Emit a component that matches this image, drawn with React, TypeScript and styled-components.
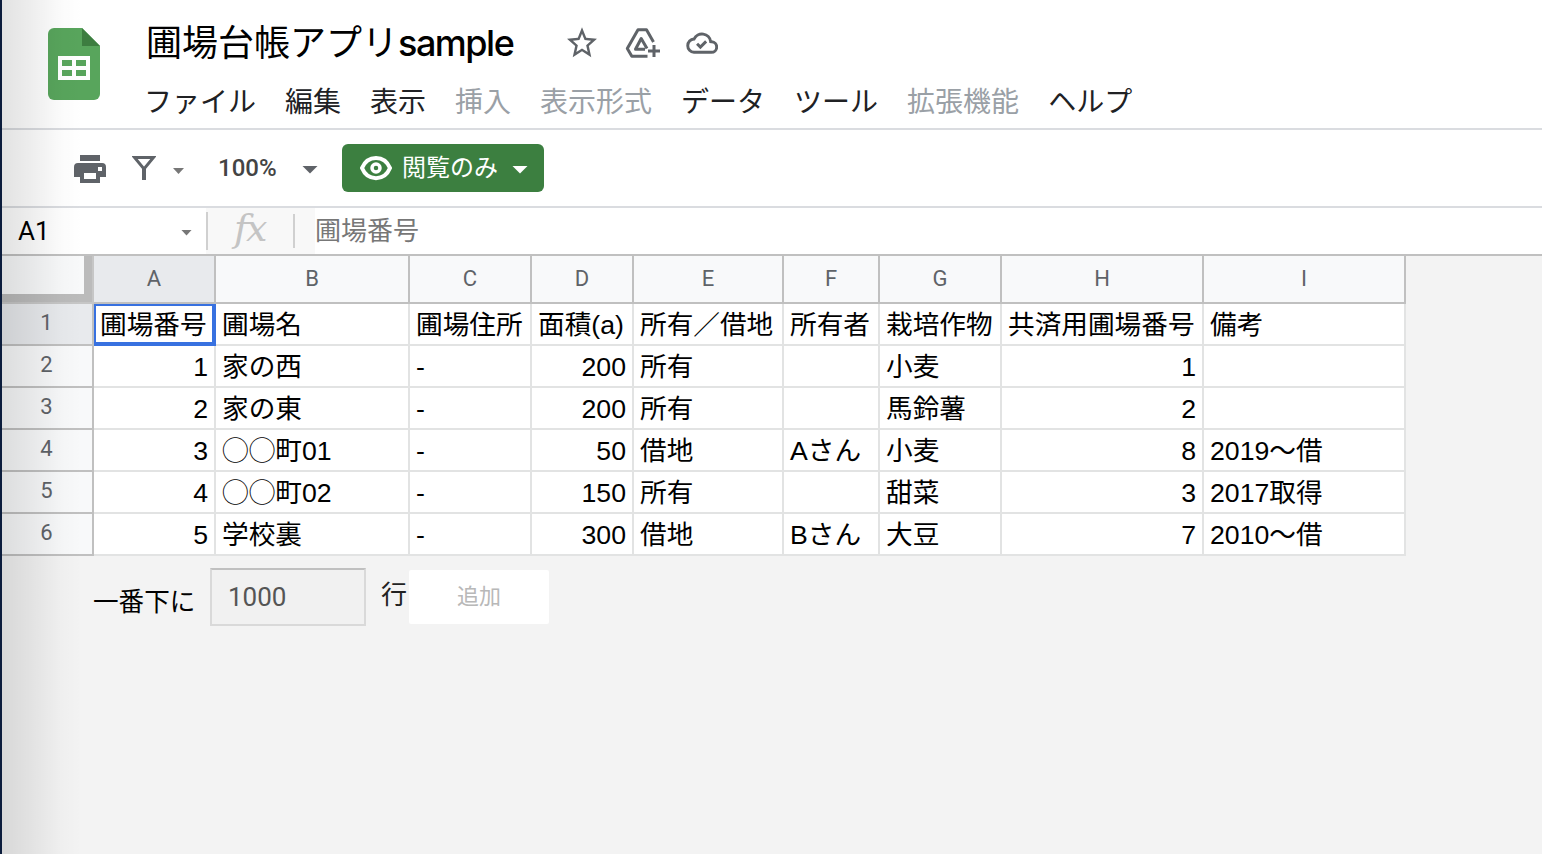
import React from "react";
import styled, { createGlobalStyle } from "styled-components";

const JP = '"Noto Sans CJK JP", sans-serif';

const GlobalStyle = createGlobalStyle`
  *, *::before, *::after { box-sizing: border-box; }
  body { margin: 0; background: #f3f3f3; overflow: hidden; font-family: "Liberation Sans", ${JP}; }
`;

const Page = styled.div`
  position: relative;
  height: 854px;
  border-left: 2px solid #0b1c3c;
  background: #f3f3f3;
  color: #000;
`;

const EdgeShadow = styled.div`
  position: absolute;
  inset: 0 auto 0 0;
  width: 80px;
  pointer-events: none;
  background: linear-gradient(to right, rgba(0, 0, 0, 0.115), rgba(0, 0, 0, 0.07) 35%, rgba(0, 0, 0, 0.015) 75%, transparent);
`;

const Header = styled.header`
  display: flex;
  height: 130px;
  padding-left: 46px;
  background: #fff;
  border-bottom: 2px solid #dadce0;
`;

const Logo = styled.svg`
  flex: none;
  width: 52px;
  height: 72px;
  margin-top: 28px;
`;

const HeaderMain = styled.div`
  display: flex;
  flex-direction: column;
  margin-left: 44px;
`;

const TitleRow = styled.div`
  display: flex;
  align-items: center;
  height: 83px;
  padding: 3px 0 0 2px;
`;

const Title = styled.h1`
  margin: 0;
  width: 418px;
  font: 400 36px/54px Inter, ${JP};
  white-space: nowrap;
`;

const Latin = styled.span`
  font-weight: 500;
  letter-spacing: -1.5px;
`;

const TitleIcon = styled.svg<{ $gap?: number; $solid?: boolean }>`
  flex: none;
  margin-left: ${(p) => p.$gap ?? 0}px;
  fill: ${(p) => (p.$solid ? "#5f6368" : "none")};
  stroke: ${(p) => (p.$solid ? "none" : "#5f6368")};
`;

const Menu = styled.nav`
  display: flex;
  gap: 29px;
  height: 45px;
  font: 400 28px/34px ${JP};
`;

const MenuItem = styled.span<{ $disabled?: boolean }>`
  color: ${(p) => (p.$disabled ? "#9aa0a6" : "#202124")};
  white-space: nowrap;
`;

const Toolbar = styled.div`
  display: flex;
  align-items: center;
  height: 78px;
  padding-left: 72px;
  background: #fff;
  border-bottom: 2px solid #dadce0;
`;

const ToolIcon = styled.svg<{ $gap?: number; $down?: number }>`
  flex: none;
  margin: ${(p) => p.$down ?? 0}px 0 0 ${(p) => p.$gap ?? 0}px;
`;

const Caret = styled.span<{ $w: number; $h: number; $gap: number; $color: string; $down?: number }>`
  flex: none;
  width: ${(p) => p.$w}px;
  height: ${(p) => p.$h}px;
  margin: ${(p) => p.$down ?? 3}px 0 0 ${(p) => p.$gap}px;
  background: ${(p) => p.$color};
  clip-path: polygon(0 0, 100% 0, 50% 100%);
`;

const Zoom = styled.span`
  width: 59px;
  margin-left: 34px;
  font: 500 24px/30px Roboto, sans-serif;
  color: #444;
  white-space: nowrap;
`;

const ViewOnly = styled.button`
  display: flex;
  align-items: center;
  width: 202px;
  height: 48px;
  margin-left: 24px;
  padding: 0 0 0 18px;
  border: 0;
  border-radius: 6px;
  background: #3c7f40;
  color: #fff;
  font: 400 24px/46px ${JP};
`;

const ViewLabel = styled.span`
  width: 99px;
  margin: -4px 0 0 10px;
  text-align: left;
  white-space: nowrap;
`;

const FormulaBar = styled.div`
  display: flex;
  height: 48px;
  background: #fff;
  border-bottom: 2px solid #c0c0c0;
`;

const NameBox = styled.div`
  display: flex;
  align-items: center;
  width: 204px;
  padding-left: 16px;
  font: 400 26px/46px Roboto, sans-serif;
`;

const NameText = styled.span`
  width: 163px;
`;

const FxArea = styled.div`
  display: flex;
  align-items: center;
  width: 109px;
  background: #f8f8f8;
`;

const Divider = styled.i<{ $h: number }>`
  width: 2px;
  height: ${(p) => p.$h}px;
  background: #d0d0d0;
`;

const Fx = styled.span`
  width: 85px;
  margin-top: -6px;
  padding-left: 26px;
  font: italic 400 38px/40px "DejaVu Serif", "Liberation Serif", serif;
  letter-spacing: -2px;
  color: #c4c4c4;
`;

const Formula = styled.span`
  font: 400 26px/42px ${JP};
  color: #777;
`;

const Grid = styled.div`
  display: grid;
  width: 1404px;
  grid-template-columns: 92px 122px 194px 122px 102px 150px 96px 122px 202px 202px;
  grid-template-rows: 48px repeat(6, 42px);
  background: #fff;
`;

const Corner = styled.div`
  border: solid #c6c6c6;
  border-width: 0 2px 2px 0;
  background: #f8f9fa;
  box-shadow: inset -8px -8px #bbb;
`;

const ColumnHead = styled.div<{ $active?: boolean }>`
  border: solid #c0c0c0;
  border-width: 0 2px 2px 0;
  background: ${(p) => (p.$active ? "#e8eaed" : "#f8f9fa")};
  color: #5f6368;
  font: 400 22px/46px Roboto, sans-serif;
  text-align: center;
`;

const RowHead = styled(ColumnHead)`
  line-height: 38px;
  padding-right: 1px;
`;

const Cell = styled.div<{ $right?: boolean; $selected?: boolean }>`
  padding: 0 6px;
  border: solid #e2e3e3;
  border-width: 0 2px 2px 0;
  font: 400 26.667px/42px "Liberation Sans", ${JP};
  text-align: ${(p) => (p.$right ? "right" : "left")};
  white-space: nowrap;
  ${(p) => p.$selected && "box-shadow: inset 2px 2px #3871e0, inset -2px -2px #3871e0; border-color: #3871e0;"}
`;

const AddRows = styled.div`
  display: flex;
  padding: 12px 0 0 91px;
  font: 400 26px/50px ${JP};
`;

const AddPrefix = styled.span`
  width: 117px;
  padding-top: 7px;
  font-size: 25.6px;
`;

const CountInput = styled.div`
  width: 156px;
  height: 58px;
  padding-left: 16px;
  border: 2px solid #d9d9d9;
  border-top-color: #c0c0c0;
  background: #f1f1f1;
  color: #555;
  font: 400 26px/54px Roboto, sans-serif;
`;

const Unit = styled.span`
  width: 28px;
  margin-left: 15px;
  color: #222;
`;

const AddButton = styled.button`
  width: 140px;
  height: 54px;
  margin-top: 2px;
  padding: 0 0 6px;
  border: 0;
  border-radius: 2px;
  background: #fff;
  color: #b8b8b8;
  font: 400 22px/48px ${JP};
`;

const menu: [string, boolean][] = [
  ["ファイル", false], ["編集", false], ["表示", false], ["挿入", true], ["表示形式", true],
  ["データ", false], ["ツール", false], ["拡張機能", true], ["ヘルプ", false],
];

const columns = "ABCDEFGHI".split("");
const numeric = [0, 3, 7];

const rows = [
  ["圃場番号", "圃場名", "圃場住所", "面積(a)", "所有／借地", "所有者", "栽培作物", "共済用圃場番号", "備考"],
  ["1", "家の西", "-", "200", "所有", "", "小麦", "1", ""],
  ["2", "家の東", "-", "200", "所有", "", "馬鈴薯", "2", ""],
  ["3", "◯◯町01", "-", "50", "借地", "Aさん", "小麦", "8", "2019〜借"],
  ["4", "◯◯町02", "-", "150", "所有", "", "甜菜", "3", "2017取得"],
  ["5", "学校裏", "-", "300", "借地", "Bさん", "大豆", "7", "2010〜借"],
];

export default function App() {
  return (
    <>
      <GlobalStyle />
      <Page>
        <Header>
          <Logo viewBox="0 0 52 72">
            <path d="M6 0H34L52 18V66a6 6 0 0 1-6 6H6a6 6 0 0 1-6-6V6a6 6 0 0 1 6-6Z" fill="#58a55c" />
            <path d="M34 0L52 18H34Z" fill="#3d7d40" />
            <path fillRule="evenodd" d="M10 28H42V52H10ZM14 32V38H24V32ZM28 32V38H38V32ZM14 42V48H24V42ZM28 42V48H38V42Z" fill="#fff" />
          </Logo>
          <HeaderMain>
            <TitleRow>
              <Title>圃場台帳アプリ<Latin>sample</Latin></Title>
              <TitleIcon $solid width="36" height="38" viewBox="0 0 24 24" preserveAspectRatio="none">
                <path d="M22 9.24l-7.19-.62L12 2 9.19 8.63 2 9.24l5.46 4.73L5.82 21 12 17.27 18.18 21l-1.63-7.03L22 9.24zM12 15.4l-3.76 2.27 1-4.28-3.32-2.88 4.38-.38L12 6.1l1.71 4.04 4.38.38-3.32 2.88 1 4.28L12 15.4z" />
              </TitleIcon>
              <TitleIcon $gap={25} width="36" height="32" viewBox="0 0 36 32" strokeWidth="3" strokeLinejoin="round">
                <path d="M28.500 15L21.500 2.800H13L2.300 21.500L6.800 29.200H22.500M20 22.300H10.500L16.200 11.500L22 21.500M29 18V30M23 24H35" />
              </TitleIcon>
              <TitleIcon $gap={25} width="32" height="32" viewBox="0 0 24 24" strokeWidth="2.200">
                <path d="M6 19h13a4 4 0 0 0 .3-7.990l-.8-.05A6.600 6.600 0 0 0 6 9.020A5 5 0 0 0 6 19ZM8.300 12.600l2.500 2.500 4.300-4.300" />
              </TitleIcon>
            </TitleRow>
            <Menu>
              {menu.map(([label, off]) => <MenuItem key={label} $disabled={off}>{label}</MenuItem>)}
            </Menu>
          </HeaderMain>
        </Header>

        <Toolbar>
          <ToolIcon $down={2} width="32" height="28" viewBox="0 0 32 28" fill="#5f6368">
            <path fillRule="evenodd" d="M6 0H26V6H6ZM4 8H28a4 4 0 0 1 4 4V22H26V28H6V22H0V12a4 4 0 0 1 4-4ZM10 18V24H22V18ZM24 12V16H28V12Z" />
          </ToolIcon>
          <ToolIcon $gap={26} width="24" height="24" viewBox="0 0 24 24" fill="none" stroke="#5f6368">
            <path d="M2.500 1.500H21.500L12 13Z" strokeWidth="3" />
            <path d="M12 12V24" strokeWidth="4" />
          </ToolIcon>
          <Caret $w={11} $h={6} $gap={17} $down={6} $color="#777" />
          <Zoom>100%</Zoom>
          <Caret $w={16} $h={8} $gap={25} $color="#5f6368" />
          <ViewOnly>
            <ToolIcon width="32" height="26" viewBox="0 0 32 26" fill="none" stroke="#fff">
              <path d="M2 13C7.500-.5 24.500-.5 30 13C24.500 26.500 7.500 26.500 2 13Z" strokeWidth="4" />
              <circle cx="16" cy="13" r="4" strokeWidth="3.500" />
            </ToolIcon>
            <ViewLabel>閲覧のみ</ViewLabel>
            <Caret $w={16} $h={8} $gap={11} $color="#fff" />
          </ViewOnly>
        </Toolbar>

        <FormulaBar>
          <NameBox>
            <NameText>A1</NameText>
            <Caret $w={11} $h={6} $gap={0} $color="#777" />
          </NameBox>
          <FxArea>
            <Divider $h={38} />
            <Fx>fx</Fx>
            <Divider $h={34} />
          </FxArea>
          <Formula>圃場番号</Formula>
        </FormulaBar>

        <Grid>
          <Corner />
          {columns.map((c, i) => <ColumnHead key={c} $active={i === 0}>{c}</ColumnHead>)}
          {rows.map((row, r) => (
            <React.Fragment key={r}>
              <RowHead $active={r === 0}>{r + 1}</RowHead>
              {row.map((text, c) => (
                <Cell key={c} $right={r > 0 && numeric.includes(c)} $selected={r === 0 && c === 0}>{text}</Cell>
              ))}
            </React.Fragment>
          ))}
        </Grid>

        <AddRows>
          <AddPrefix>一番下に</AddPrefix>
          <CountInput>1000</CountInput>
          <Unit>行</Unit>
          <AddButton>追加</AddButton>
        </AddRows>
        <EdgeShadow />
      </Page>
    </>
  );
}
